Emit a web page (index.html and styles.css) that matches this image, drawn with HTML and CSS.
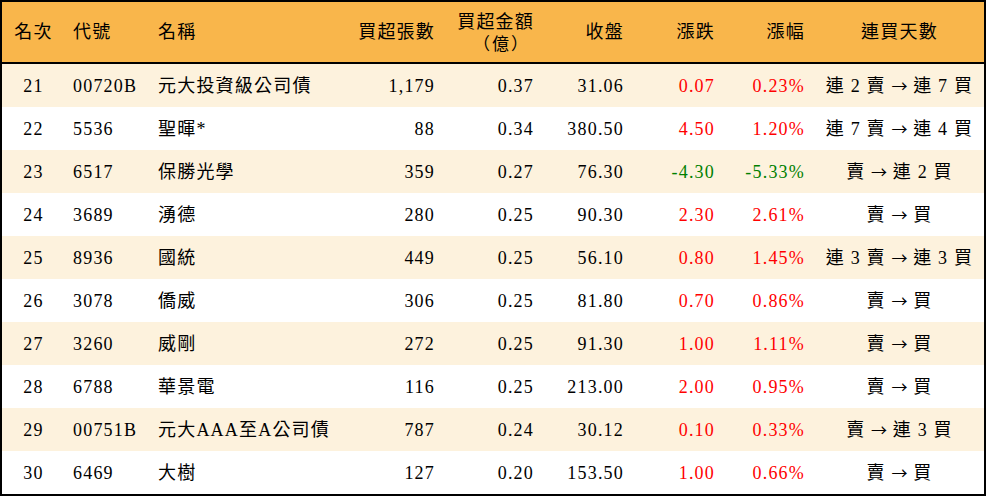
FILE: index.html
```html
<!DOCTYPE html>
<html lang="zh-Hant">
<head>
<meta charset="utf-8">
<title>買超排行</title>
<link rel="stylesheet" href="styles.css">
</head>
<body>
<div class="frame">
<table class="rank">
<colgroup>
<col class="c-rank"><col class="c-code"><col class="c-name"><col class="c-vol"><col class="c-amt"><col class="c-close"><col class="c-chg"><col class="c-pct"><col class="c-days">
</colgroup>
<thead>
<tr>
<th class="ctr">名次</th>
<th class="lft">代號</th>
<th class="lft">名稱</th>
<th class="rgt">買超張數</th>
<th class="rgt two"><span class="line">買超金額</span><span class="line unit">（億）</span></th>
<th class="rgt">收盤</th>
<th class="rgt">漲跌</th>
<th class="rgt">漲幅</th>
<th class="ctr">連買天數</th>
</tr>
</thead>
<tbody>
<tr class="alt"><td class="ctr">21</td><td class="lft">00720B</td><td class="lft">元大投資級公司債</td><td class="rgt">1,179</td><td class="rgt">0.37</td><td class="rgt">31.06</td><td class="rgt up">0.07</td><td class="rgt up">0.23%</td><td class="ctr">連 2 賣 <span class="arrow">→</span> 連 7 買</td></tr>
<tr><td class="ctr">22</td><td class="lft">5536</td><td class="lft">聖暉*</td><td class="rgt">88</td><td class="rgt">0.34</td><td class="rgt">380.50</td><td class="rgt up">4.50</td><td class="rgt up">1.20%</td><td class="ctr">連 7 賣 <span class="arrow">→</span> 連 4 買</td></tr>
<tr class="alt"><td class="ctr">23</td><td class="lft">6517</td><td class="lft">保勝光學</td><td class="rgt">359</td><td class="rgt">0.27</td><td class="rgt">76.30</td><td class="rgt down">-4.30</td><td class="rgt down">-5.33%</td><td class="ctr">賣 <span class="arrow">→</span> 連 2 買</td></tr>
<tr><td class="ctr">24</td><td class="lft">3689</td><td class="lft">湧德</td><td class="rgt">280</td><td class="rgt">0.25</td><td class="rgt">90.30</td><td class="rgt up">2.30</td><td class="rgt up">2.61%</td><td class="ctr">賣 <span class="arrow">→</span> 買</td></tr>
<tr class="alt"><td class="ctr">25</td><td class="lft">8936</td><td class="lft">國統</td><td class="rgt">449</td><td class="rgt">0.25</td><td class="rgt">56.10</td><td class="rgt up">0.80</td><td class="rgt up">1.45%</td><td class="ctr">連 3 賣 <span class="arrow">→</span> 連 3 買</td></tr>
<tr><td class="ctr">26</td><td class="lft">3078</td><td class="lft">僑威</td><td class="rgt">306</td><td class="rgt">0.25</td><td class="rgt">81.80</td><td class="rgt up">0.70</td><td class="rgt up">0.86%</td><td class="ctr">賣 <span class="arrow">→</span> 買</td></tr>
<tr class="alt"><td class="ctr">27</td><td class="lft">3260</td><td class="lft">威剛</td><td class="rgt">272</td><td class="rgt">0.25</td><td class="rgt">91.30</td><td class="rgt up">1.00</td><td class="rgt up">1.11%</td><td class="ctr">賣 <span class="arrow">→</span> 買</td></tr>
<tr><td class="ctr">28</td><td class="lft">6788</td><td class="lft">華景電</td><td class="rgt">116</td><td class="rgt">0.25</td><td class="rgt">213.00</td><td class="rgt up">2.00</td><td class="rgt up">0.95%</td><td class="ctr">賣 <span class="arrow">→</span> 買</td></tr>
<tr class="alt"><td class="ctr">29</td><td class="lft">00751B</td><td class="lft">元大AAA至A公司債</td><td class="rgt">787</td><td class="rgt">0.24</td><td class="rgt">30.12</td><td class="rgt up">0.10</td><td class="rgt up">0.33%</td><td class="ctr">賣 <span class="arrow">→</span> 連 3 買</td></tr>
<tr><td class="ctr">30</td><td class="lft">6469</td><td class="lft">大樹</td><td class="rgt">127</td><td class="rgt">0.20</td><td class="rgt">153.50</td><td class="rgt up">1.00</td><td class="rgt up">0.66%</td><td class="ctr">賣 <span class="arrow">→</span> 買</td></tr>
</tbody>
</table>
</div>
</body>
</html>
```

FILE: styles.css
```css
html, body {
  margin: 0;
  padding: 0;
  background: #ffffff;
}

.frame {
  width: 986px;
  height: 496px;
  box-sizing: border-box;
  border: 2px solid #000000;
  background: #ffffff;
  overflow: hidden;
}

.rank {
  width: 982px;
  table-layout: fixed;
  border-collapse: separate;
  border-spacing: 0;
  font-family: "Liberation Serif", "Noto Sans CJK TC", serif;
  font-size: 18px;
  letter-spacing: 1.2px;
  color: #000000;
}

.c-rank { width: 62px; }
.c-code { width: 86px; }
.c-name { width: 200px; }
.c-vol { width: 95px; }
.c-amt { width: 100px; }
.c-close { width: 90px; }
.c-chg { width: 90px; }
.c-pct { width: 90px; }
.c-days { width: 169px; }

.rank th {
  height: 60px;
  padding: 0;
  background: #f9b64b;
  border-bottom: 2px solid #000000;
  font-weight: normal;
  line-height: 20px;
  white-space: nowrap;
}

.rank th .line {
  display: block;
  height: 19px;
  line-height: 19px;
}

.rank th .unit {
  font-family: "Noto Sans CJK TC", sans-serif;
  font-size: 17px;
  letter-spacing: 2px;
  margin-right: 4px;
  margin-top: 1px;
}

.rank td {
  height: 43px;
  padding: 0;
  line-height: 20px;
  white-space: nowrap;
}

.rank tr.alt td {
  background: #fdf2dd;
}

.arrow {
  font-family: "Noto Sans CJK TC", sans-serif;
  font-size: 16px;
  letter-spacing: 0;
}

.ctr { text-align: center; }
.lft { text-align: left; }
.rgt { text-align: right; }

.rank th:nth-child(1), .rank td:nth-child(1) { padding-left: 1px; }
.rank th:nth-child(2), .rank td:nth-child(2) { padding-left: 9px; }
.rank th:nth-child(3), .rank td:nth-child(3) { padding-left: 8px; }
.rank th:nth-child(4), .rank td:nth-child(4) { padding-right: 10px; }
.rank th:nth-child(5), .rank td:nth-child(5) { padding-right: 11px; }
.rank th:nth-child(6), .rank td:nth-child(6) { padding-right: 11px; }
.rank th:nth-child(7), .rank td:nth-child(7) { padding-right: 10px; }
.rank th:nth-child(8), .rank td:nth-child(8) { padding-right: 10px; }
.rank th:nth-child(9), .rank td:nth-child(9) { padding-left: 0; padding-right: 0; }

.up { color: #ff0000; }
.down { color: #008000; }
```
